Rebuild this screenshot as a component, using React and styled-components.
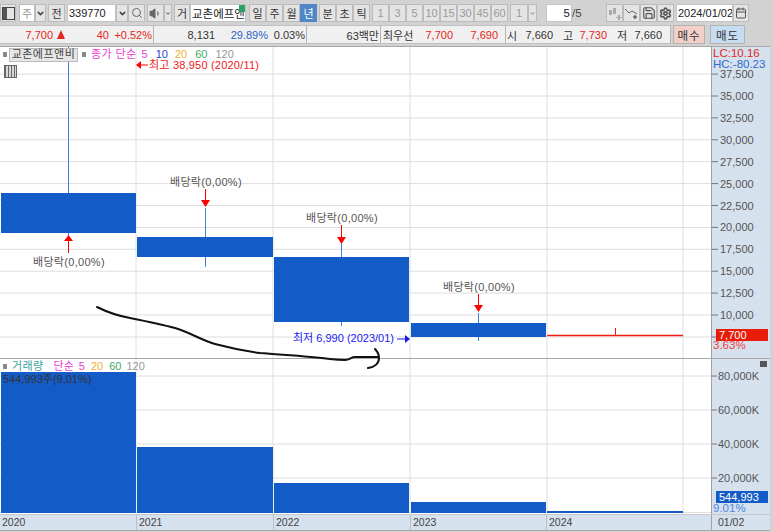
import React from "react"
import styled, { createGlobalStyle } from "styled-components"
import { Search, Volume1, Save, Settings, Calendar, ChevronDown } from "lucide-react"

const Global = createGlobalStyle`
  html, body { margin: 0; padding: 0; background: #d2d2d2; }
  body { font-family: "Liberation Sans", "Noto Sans CJK KR", sans-serif; font-size: 11px; color: #333; }
  * { box-sizing: border-box; }
`

const Window = styled.div`
  width: 773px;
  height: 532px;
  overflow: hidden;
  display: flex;
  flex-direction: column;
  background: #d2d2d2;
`

const ToolRow = styled.div`
  display: flex;
  align-items: center;
  height: 18px;
  margin-top: 4px;
  padding-right: 27px;
`

const Btn = styled.div`
  width: ${p => p.$w || 17}px;
  height: 18px;
  margin-left: ${p => p.$ml || 0}px;
  flex: none;
  display: flex;
  align-items: center;
  justify-content: center;
  font-size: 11px;
  border: 1px solid ${p => (p.$active ? "#4f86c6" : "#bcbcbc")};
  background: ${p => (p.$active ? "#4f86c6" : p.$white ? "#fff" : "#e4e4e4")};
  color: ${p => (p.$active ? "#fff" : p.$off ? "#9a9a9a" : "#333")};
`

const Field = styled.div`
  width: ${p => p.$w}px;
  height: 18px;
  margin-left: ${p => p.$ml || 0}px;
  flex: none;
  position: relative;
  display: flex;
  align-items: center;
  justify-content: ${p => (p.$right ? "flex-end" : "flex-start")};
  padding: 0 1px;
  overflow: hidden;
  white-space: nowrap;
  font-size: ${p => p.$fs || 11}px;
  background: #fff;
  border: 1px solid #c4c4c4;
  color: #222;
`

const GreenCorner = styled.span`
  position: absolute;
  top: 0;
  right: 0;
  width: 6px;
  height: 7px;
  background: #2f9e68;
`

const Slash = styled.span`
  flex: none;
  width: 14px;
  font-size: 11.5px;
  color: #444;
`

const QuoteRow = styled.div`
  display: flex;
  align-items: center;
  height: 19px;
  margin-top: 3px;
`

const Segment = styled.div`
  width: ${p => p.$w}px;
  height: 19px;
  flex: none;
  display: flex;
  align-items: center;
  background: #f0f0f0;
  border-right: 1px solid #b4b4b4;
  border-top: 1px solid #c0c0c0;
  border-bottom: 1px solid #c0c0c0;
  white-space: nowrap;
`

const Value = styled.span`
  width: ${p => p.$w}px;
  flex: none;
  text-align: ${p => p.$left ? "left" : "right"};
  padding-left: ${p => p.$pl || 0}px;
  color: ${p => p.$c || "#333"};
  font-size: 11px;
`

const Triangle = styled.span`
  width: 0;
  height: 0;
  margin-left: 4px;
  border-left: 4px solid transparent;
  border-right: 4px solid transparent;
  border-bottom: 9px solid #e8261c;
`

const OrderBtn = styled.div`
  flex: none;
  width: ${p => p.$w}px;
  margin-left: ${p => p.$ml}px;
  height: 19px;
  display: flex;
  align-items: center;
  justify-content: center;
  letter-spacing: 1px;
  color: #333;
  font-size: 11.5px;
  background: ${p => p.$bg};
  border: 1px solid #b2b2b2;
`

const Charts = styled.div`
  position: relative;
  width: 770px;
  height: 485px;
  margin-top: 2px;
  display: flex;
  flex-direction: column;
  border-top: 1px solid #a8a8a8;
`

const Pane = styled.div`
  flex: none;
  height: ${p => p.$h}px;
  display: flex;
  border-bottom: 1px solid ${p => p.$line || "#a8a8a8"};
`

const Plot = styled.div`
  position: relative;
  width: 712px;
  flex: none;
  background: ${p => p.$bg || "#fff"};
  border-right: 1px solid #a0a0a0;
  overflow: hidden;
`

const Scale = styled.div`
  position: relative;
  flex: 1;
  background: #d6e1ee;
  overflow: hidden;
`

const Drawing = styled.svg`
  display: block;
  font-family: "Liberation Sans", "Noto Sans CJK KR", sans-serif;
  font-size: 11px;
`

const Scribble = styled.svg`
  position: absolute;
  left: 0;
  top: 0;
  pointer-events: none;
`

const Legend = styled.div`
  position: absolute;
  top: 1px;
  left: 3px;
  display: flex;
  align-items: center;
  white-space: nowrap;
  font-size: 11px;
  line-height: 13px;
  height: 13px;
`

const Dot = styled.span`
  width: 4px;
  height: 5px;
  flex: none;
  margin-right: ${p => p.$mr || 0}px;
  background: #888;
`

const NameTag = styled.span`
  height: 14px;
  width: 69px;
  margin: 0 4px 0 2px;
  flex: none;
  display: flex;
  align-items: center;
  justify-content: center;
  letter-spacing: 0.5px;
  background: #e6e6e6;
  border: 1px solid #bbb;
  color: #444;
`

const LegendText = styled.span`
  color: ${p => p.$c};
  margin-left: ${p => p.$ml || 0}px;
  letter-spacing: ${p => p.$ls || 0}px;
`

const GridBtn = styled.span`
  position: absolute;
  left: 4px;
  top: 18px;
  width: 13px;
  height: 13px;
  background: repeating-linear-gradient(90deg, #666 0 1px, #d8d8d8 1px 3px);
  border: 1px solid #666;
`

const ScaleNote = styled.div`
  position: absolute;
  left: 1px;
  top: ${p => p.$top}px;
  line-height: 11px;
  font-size: 11.5px;
  white-space: nowrap;
  color: ${p => p.$c};
`

const PriceTag = styled.div`
  position: absolute;
  left: 4px;
  top: ${p => p.$top}px;
  width: 52px;
  height: 12px;
  line-height: 12px;
  padding-left: 3px;
  background: ${p => p.$bg};
  color: #fff;
`

const CloseBox = styled.span`
  position: absolute;
  right: 3px;
  top: 2px;
  width: 7px;
  height: 6px;
  background: #555;
`

const DateBar = styled.div`
  flex: none;
  height: 16px;
  display: flex;
  background: #d6e1ee;
  border-bottom: 1px solid #a8a8a8;
`

const DateCell = styled.div`
  flex: none;
  width: ${p => p.$w}px;
  padding-left: ${p => p.$pl || 2}px;
  line-height: 15px;
  color: #444;
  font-size: 10.5px;
  border-right: 1px solid ${p => p.$line || "#b8c2cf"};
`

const GRID = "#dedede"
const BLUE = "#135cc8"
const WICK = "#3f80e0"
const COLS = [136, 273, 410, 547, 683]

const priceY = p => 268 - (p - 10000) * 0.00876

const candles = [
  { x: 1, w: 135, top: 146, bottom: 186, wx: 68, w1: 0, w2: 193 },
  { x: 137, w: 136, top: 190, bottom: 210, wx: 205, w1: 161, w2: 220 },
  { x: 274, w: 135, top: 210, bottom: 275, wx: 341, w1: 196, w2: 279 },
  { x: 411, w: 135, top: 276, bottom: 290, wx: 478, w1: 266, w2: 294 }
]

const drops = [
  { x: 205, label: 170, labelY: 139, from: 142, to: 160 },
  { x: 341, label: 306, labelY: 175, from: 178, to: 197 },
  { x: 478, label: 443, labelY: 244, from: 247, to: 265 }
]

const prices = []
for (let p = 37500; p >= 10000; p -= 2500) prices.push(p)

const volumeTicks = [
  { y: 17, label: "80,000K" },
  { y: 51, label: "60,000K" },
  { y: 85, label: "40,000K" },
  { y: 119, label: "20,000K" }
]

const bars = [
  { x: 1, w: 135, y: 13 },
  { x: 137, w: 136, y: 88 },
  { x: 274, w: 135, y: 124 },
  { x: 411, w: 135, y: 143 },
  { x: 547, w: 136, y: 152 }
]

function PricePlot() {
  return (
    <Drawing width="711" height="311">
      {prices.map(p => (
        <line key={p} x1="0" x2="711" y1={priceY(p)} y2={priceY(p)} stroke={GRID} />
      ))}
      <line x1="0" x2="711" y1="290" y2="290" stroke={GRID} />
      {COLS.map(x => <line key={x} x1={x} x2={x} y1="0" y2="311" stroke={GRID} />)}
      {candles.map(c => (
        <g key={c.x}>
          <line x1={c.wx + 0.5} x2={c.wx + 0.5} y1={c.w1} y2={c.w2} stroke={WICK} />
          <rect x={c.x} y={c.top} width={c.w} height={c.bottom - c.top} fill={BLUE} />
        </g>
      ))}
      <line x1="547" x2="683" y1="288.5" y2="288.5" stroke="#f01c10" strokeWidth="1.6" />
      <line x1="615.5" x2="615.5" y1="281" y2="288" stroke="#f01c10" />
      <path d="M68.5 190v16" stroke="#f00" />
      <path d="M64 194l4.5-6 4.5 6z" fill="#f00" />
      <text x="33" y="219" fill="#555" letterSpacing="0.3">배당락(0,00%)</text>
      {drops.map(d => (
        <g key={d.x}>
          <text x={d.label} y={d.labelY} fill="#555" letterSpacing="0.3">배당락(0,00%)</text>
          <path d={`M${d.x + 0.5} ${d.from}V${d.to - 6}`} stroke="#f00" />
          <path d={`M${d.x - 4} ${d.to - 7}h9l-4.5 7z`} fill="#f00" />
        </g>
      ))}
      <path d="M148 18h-7" stroke="#f00" />
      <path d="M141 14v8l-5-4z" fill="#f00" />
      <text x="149" y="22" fill="#f01818" letterSpacing="0.2">최고 38,950 (2020/11)</text>
      <text x="293" y="295" fill="#1a1af0">최저 6,990 (2023/01)</text>
      <path d="M397 292h10" stroke="#1a1af0" />
      <path d="M405 288v8l5-4z" fill="#1a1af0" />
    </Drawing>
  )
}

function PriceScale() {
  return (
    <Drawing width="58" height="311">
      {prices.map(p => (
        <g key={p}>
          <line x1="0" x2="6" y1={priceY(p)} y2={priceY(p)} stroke="#777" />
          <text x="8" y={priceY(p) + 4} fill="#555">{p.toLocaleString("en-US")}</text>
        </g>
      ))}
      <line x1="0" x2="6" y1="290" y2="290" stroke="#777" />
    </Drawing>
  )
}

function VolumePlot() {
  return (
    <Drawing width="711" height="155">
      {volumeTicks.map(t => <line key={t.y} x1="0" x2="711" y1={t.y} y2={t.y} stroke={GRID} />)}
      <line x1="0" x2="711" y1="153.5" y2="153.5" stroke={GRID} />
      {COLS.map(x => <line key={x} x1={x} x2={x} y1="0" y2="155" stroke={GRID} />)}
      {bars.map(b => <rect key={b.x} x={b.x} y={b.y} width={b.w} height={154 - b.y} fill={BLUE} />)}
      <text x="3" y="24" fill="#333">544,993주(9,01%)</text>
    </Drawing>
  )
}

function VolumeScale() {
  return (
    <Drawing width="58" height="155">
      {volumeTicks.map(t => (
        <g key={t.y}>
          <line x1="0" x2="5" y1={t.y} y2={t.y} stroke="#777" />
          <text x="6" y={t.y + 4} fill="#555">{t.label}</text>
        </g>
      ))}
    </Drawing>
  )
}

export default function App() {
  const intervals = ["1", "3", "5", "10", "15", "30", "45", "60"]

  return (
    <Window>
      <Global />
      <ToolRow>
        <Btn $w={16}>
          <svg width="13" height="13" viewBox="0 0 13 13">
            <rect x="0.5" y="0.5" width="12" height="12" fill="none" stroke="#444" />
            <rect x="1" y="1" width="4" height="11" fill="#555" />
          </svg>
        </Btn>
        <Btn $w={16} $ml={3} $white $off>주</Btn>
        <Btn $w={11}><ChevronDown size={9} strokeWidth={4} color="#444" /></Btn>
        <Btn $ml={2}>전</Btn>
        <Field $w={49} $ml={2}>339770</Field>
        <Btn $w={12}><ChevronDown size={9} strokeWidth={4} color="#444" /></Btn>
        <Btn><Search size={12} color="#666" /></Btn>
        <Btn $ml={2}><Volume1 size={13} color="#666" fill="#666" /></Btn>
        <Btn $w={8}><ChevronDown size={7} strokeWidth={4} color="#444" /></Btn>
        <Btn $w={16} $ml={2}>거</Btn>
        <Field $w={56} $fs={11.5}>교촌에프앤<GreenCorner /></Field>
        <Btn $ml={3}>일</Btn>
        <Btn>주</Btn>
        <Btn>월</Btn>
        <Btn $active>년</Btn>
        <Btn $ml={2}>분</Btn>
        <Btn>초</Btn>
        <Btn>틱</Btn>
        {intervals.map((m, i) => <Btn key={m} $off $ml={i === 0 ? 2 : 0}>{m}</Btn>)}
        <Btn $w={18} $ml={2} $off>1</Btn>
        <Btn $w={9}><ChevronDown size={7} strokeWidth={4} color="#aaa" /></Btn>
        <Field $w={26} $ml={9} $right $fs={11.5}>5</Field>
        <Slash>/5</Slash>
        <Btn $ml={20}>
          <svg width="14" height="13" viewBox="0 0 14 13" fill="#aaa">
            <rect x="1" y="3" width="3" height="5" />
            <rect x="5" y="1" width="3" height="6" />
            <path d="M10 8h2v2h2v1h-2v2h-2v-2H8v-1h2z" />
          </svg>
        </Btn>
        <Btn>
          <svg width="15" height="13" viewBox="0 0 15 13" fill="none" stroke="#666">
            <path d="M1 2l4 4 3-2 5 3" />
            <path d="M11 8v4M9 10h4" strokeWidth="1.5" />
          </svg>
        </Btn>
        <Btn><Save size={14} color="#555" /></Btn>
        <Btn><Settings size={13} color="#555" strokeWidth={3} /></Btn>
        <Field $w={57} $ml={2}>2024/01/02</Field>
        <Btn $w={16}><Calendar size={12} color="#555" /></Btn>
      </ToolRow>
      <QuoteRow>
        <Segment $w={154}>
          <Value $w={53} $c="#e8261c">7,700</Value>
          <Triangle />
          <Value $w={44} $c="#e8261c">40</Value>
          <Value $w={43} $c="#e8261c">+0.52%</Value>
        </Segment>
        <Segment $w={153}>
          <Value $w={61}>8,131</Value>
          <Value $w={53} $c="#2f63c8">29.89%</Value>
          <Value $w={37}>0.03%</Value>
        </Segment>
        <Segment $w={74}>
          <Value $w={72}>63백만</Value>
        </Segment>
        <Segment $w={125}>
          <Value $w={34} $left $pl={2}>최우선</Value>
          <Value $w={38} $c="#e8261c">7,700</Value>
          <Value $w={45} $c="#e8261c">7,690</Value>
        </Segment>
        <Segment $w={165}>
          <Value $w={12} $left $pl={1}>시</Value>
          <Value $w={35}>7,660</Value>
          <Value $w={20}>고</Value>
          <Value $w={34} $c="#e8261c">7,730</Value>
          <Value $w={20}>저</Value>
          <Value $w={35}>7,660</Value>
        </Segment>
        <OrderBtn $w={32} $ml={2} $bg="#f2cfc9">매수</OrderBtn>
        <OrderBtn $w={35} $ml={5} $bg="#c6dcf2">매도</OrderBtn>
      </QuoteRow>
      <Charts>
        <Pane $h={312}>
          <Plot>
            <PricePlot />
            <Legend>
              <Dot />
              <NameTag>교촌에프앤비</NameTag>
              <Dot $mr={5} />
              <LegendText $c="#e83fd0" $ls={0.4}>종가 단순</LegendText>
              <LegendText $c="#e83fd0" $ml={5}>5</LegendText>
              <LegendText $c="#2a48d0" $ml={8}>10</LegendText>
              <LegendText $c="#f0b030" $ml={7}>20</LegendText>
              <LegendText $c="#40a860" $ml={8}>60</LegendText>
              <LegendText $c="#999" $ml={8}>120</LegendText>
            </Legend>
            <GridBtn />
          </Plot>
          <Scale>
            <PriceScale />
            <ScaleNote $top={1} $c="#e8261c">LC:10.16</ScaleNote>
            <ScaleNote $top={12} $c="#2f6ad0">HC:-80.23</ScaleNote>
            <PriceTag $top={282} $bg="#e81c08">7,700</PriceTag>
            <ScaleNote $top={293} $c="#f04040">3.63%</ScaleNote>
          </Scale>
        </Pane>
        <Pane $h={156} $line="#c8c8c8">
          <Plot>
            <VolumePlot />
            <Legend>
              <Dot $mr={5} />
              <LegendText $c="#3aa0a0" $ls={0.4}>거래량</LegendText>
              <LegendText $c="#e83fd0" $ml={10}>단순</LegendText>
              <LegendText $c="#e83fd0" $ml={5}>5</LegendText>
              <LegendText $c="#f0b030" $ml={6}>20</LegendText>
              <LegendText $c="#40a860" $ml={6}>60</LegendText>
              <LegendText $c="#999" $ml={5}>120</LegendText>
            </Legend>
          </Plot>
          <Scale>
            <VolumeScale />
            <CloseBox />
            <PriceTag $top={132} $bg="#135cc8">544,993</PriceTag>
            <ScaleNote $top={144} $c="#4f86e0">9.01%</ScaleNote>
          </Scale>
        </Pane>
        <DateBar>
          <DateCell $w={137}>2020</DateCell>
          <DateCell $w={137}>2021</DateCell>
          <DateCell $w={137}>2022</DateCell>
          <DateCell $w={136}>2023</DateCell>
          <DateCell $w={165} $line="#a0a0a0">2024</DateCell>
          <DateCell $w={58} $pl={6} $line="transparent">01/02</DateCell>
        </DateBar>
        <Scribble width="400" height="330">
          <path
            d="M97 260c10 5 22 9 33 11 15 3 30 6 45 10 14 4 26 12 40 16 15 4 30 7 45 9 24 2 48 3 70 6 8 1 11 1 15 1 5 0 6-3 10-3h23M375 302c3 3 4 6 4 9 0 5-4 9-11 10"
            fill="none"
            stroke="#111"
            strokeWidth="2"
            strokeLinecap="round"
            strokeLinejoin="round"
          />
        </Scribble>
      </Charts>
    </Window>
  )
}
